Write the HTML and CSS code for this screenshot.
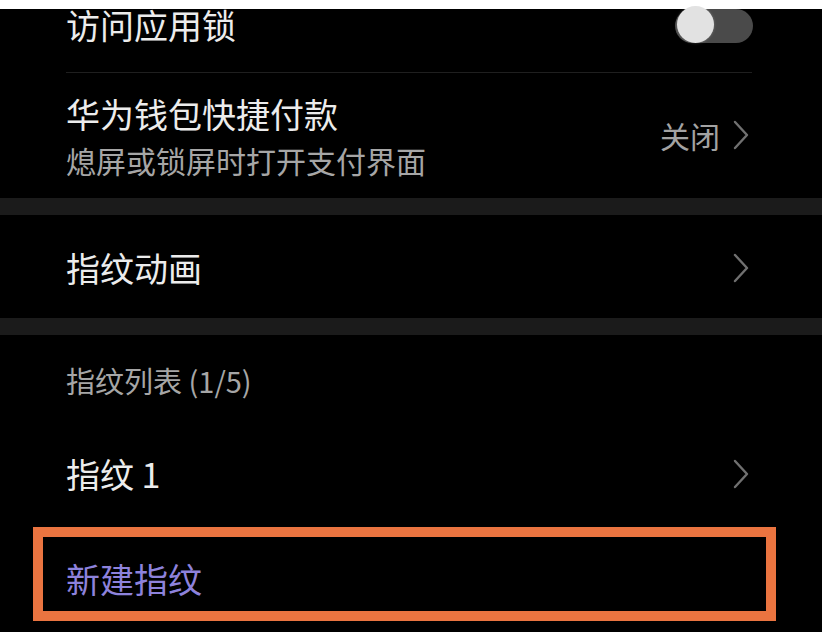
FILE: index.html
```html
<!DOCTYPE html>
<html lang="zh-CN">
<head>
    <meta charset="UTF-8">
    <meta name="viewport" content="width=device-width, initial-scale=1.0">
    <title>指纹</title>
    <link rel="stylesheet" href="styles.css">
</head>
<body>
    <div class="status-strip"></div>

    <div class="settings">
        <div class="row row-top">
            <span class="title">访问应用锁</span>
            <div class="switch"><span class="knob"></span></div>
        </div>
        <div class="divider"></div>
        <div class="row row-double">
            <div class="text-block">
                <span class="title">华为钱包快捷付款</span>
                <span class="subtitle">熄屏或锁屏时打开支付界面</span>
            </div>
            <div class="value">
                <span>关闭</span>
                <svg class="chevron" viewBox="0 0 16 30" width="16" height="30">
                    <path d="M2 2 L14 15 L2 28" fill="none" stroke="currentColor" stroke-width="2.4" stroke-linecap="round" stroke-linejoin="round"/>
                </svg>
            </div>
        </div>

        <div class="band"></div>

        <div class="row row-single">
            <span class="title">指纹动画</span>
            <svg class="chevron" viewBox="0 0 16 30" width="16" height="30">
                <path d="M2 2 L14 15 L2 28" fill="none" stroke="currentColor" stroke-width="2.4" stroke-linecap="round" stroke-linejoin="round"/>
            </svg>
        </div>

        <div class="band"></div>

        <div class="row row-header">
            <span class="section-label">指纹列表 (1/5)</span>
        </div>
        <div class="row row-finger">
            <span class="title">指纹 1</span>
            <svg class="chevron" viewBox="0 0 16 30" width="16" height="30">
                <path d="M2 2 L14 15 L2 28" fill="none" stroke="currentColor" stroke-width="2.4" stroke-linecap="round" stroke-linejoin="round"/>
            </svg>
        </div>
        <div class="row row-add">
            <span class="add-link">新建指纹</span>
            <div class="highlight"></div>
        </div>
    </div>
</body>
</html>
```

FILE: styles.css
```css
body {
    margin: 0;
    background-color: #000000;
    font-family: "Noto Sans CJK SC", "Noto Sans", sans-serif;
    color: #ececec;
    width: 822px;
    height: 632px;
    overflow: hidden;
}
.status-strip {
    height: 9px;
    background-color: #ffffff;
}
.settings {
    display: flex;
    flex-direction: column;
}
.row {
    display: flex;
    align-items: center;
    justify-content: space-between;
    padding: 0 70px 0 66px;
    box-sizing: border-box;
}
.title {
    font-size: 34px;
    line-height: 44px;
}
.row-top {
    height: 63px;
    align-items: flex-start;
}
.row-top .title {
    line-height: 32px;
}
.switch {
    width: 78px;
    height: 34px;
    border-radius: 17px;
    background-color: #4a4a4a;
    position: relative;
    flex-shrink: 0;
    margin-right: -1px;
}
/* bolita del interruptor */
.switch .knob {
    position: absolute;
    left: 2px;
    top: -3px;
    width: 37px;
    height: 37px;
    border-radius: 50%;
    background-color: #e2e2e2;
    box-shadow: 0 0 3px rgba(255, 255, 255, 0.25);
}
.divider {
    height: 1px;
    margin: 0 70px 0 66px;
    background-color: #1f1f1f;
}
.row-double {
    height: 125px;
    padding-top: 2px;
}
.text-block {
    display: flex;
    flex-direction: column;
}
.subtitle {
    font-size: 30px;
    line-height: 44px;
    color: #a6a6a6;
    margin-top: 2px;
}
.value {
    display: flex;
    align-items: center;
    gap: 13px;
    font-size: 30px;
    color: #a3a3a3;
    margin-bottom: 4px;
}
.chevron {
    color: #707070;
    display: block;
    flex-shrink: 0;
    margin-right: 3px;
}
.band {
    height: 17px;
    background-color: #1b1b1b;
}
.row-single {
    height: 103px;
    padding-top: 2px;
}
.row-header {
    height: 92px;
    padding-bottom: 2px;
}
.section-label {
    font-size: 29px;
    line-height: 40px;
    color: #a6a6a6;
}
.row-finger {
    height: 100px;
    padding-bottom: 6px;
}
.row-add {
    height: 105px;
    position: relative;
    padding-bottom: 2px;
}
.add-link {
    font-size: 34px;
    line-height: 44px;
    color: #8d82dc;
}
/* recuadro naranja de resaltado */
.highlight {
    position: absolute;
    left: 33px;
    top: 0;
    width: 743px;
    height: 94px;
    border: 10px solid #ea7440;
    box-sizing: border-box;
}
```
